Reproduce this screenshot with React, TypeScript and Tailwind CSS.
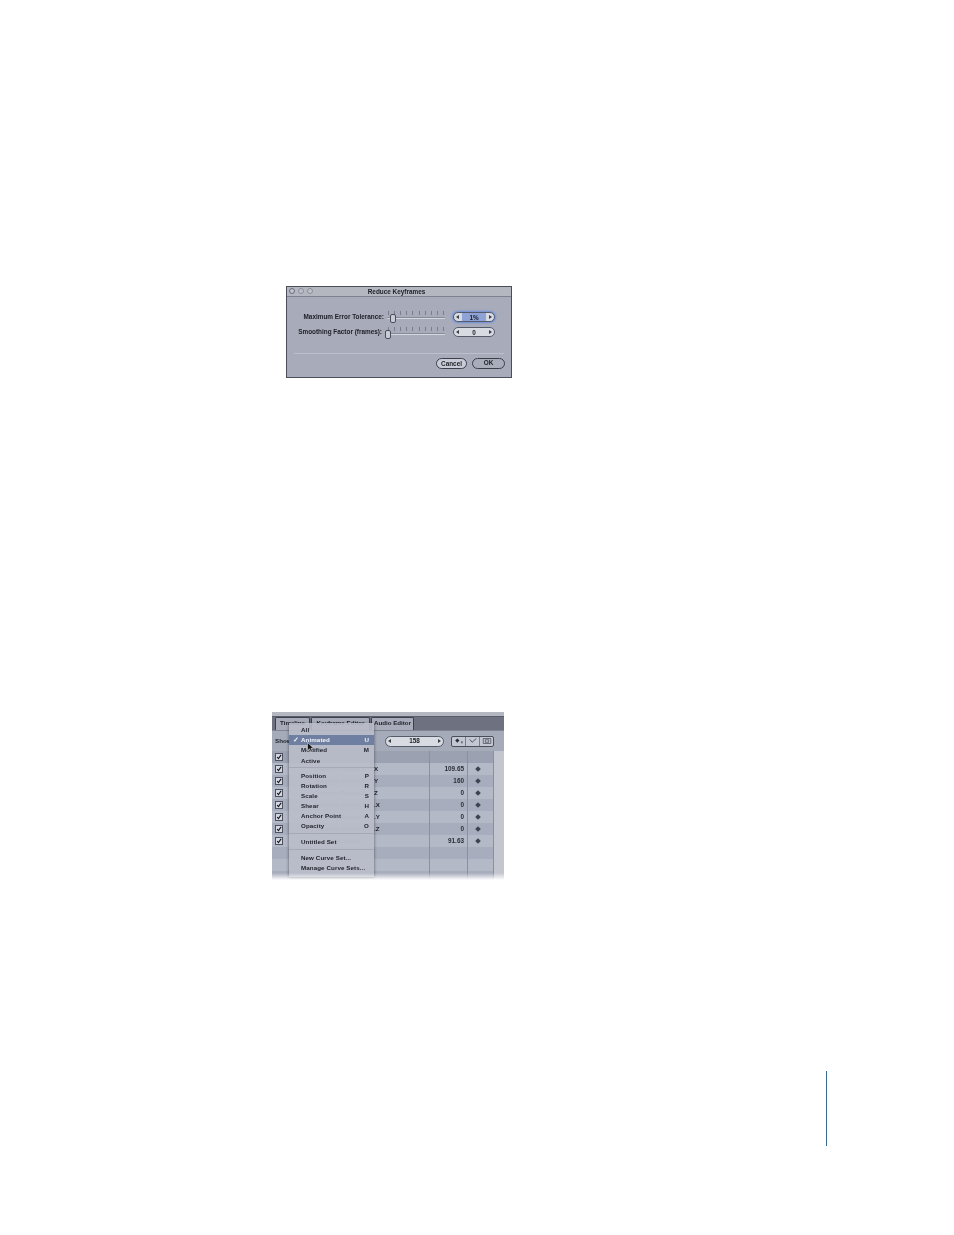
import React from "react";

const ticks = Array.from({ length: 10 });

function Slider({ thumbLeft, label, pad }: { thumbLeft: string; label: string; pad: string }) {
  return (
    <div className="flex items-center h-[15px]">
      <div className={`w-[100px] text-right whitespace-nowrap text-[6.4px] font-bold text-[#1c1e25] ${pad}`}>{label}</div>
      <div className="relative w-[58px] h-[15px]">
        <div className="absolute left-0 right-0 top-[2px] flex justify-between px-[1px]">
          {ticks.map((_, i) => (
            <div key={i} className="w-px h-[4px] bg-[#7a7e8c]" />
          ))}
        </div>
        <div className="absolute left-0 right-0 top-[8px] h-[2px] rounded-full bg-[#d5d8e0] border-t border-[#858998]" />
        <div className={`absolute top-[5px] w-[6px] h-[9px] rounded-[2px] border border-[#4a4d58] bg-[#c8ccd6] ${thumbLeft}`} />
      </div>
    </div>
  );
}

function Stepper({ value, active }: { value: string; active?: boolean }) {
  return (
    <div className={`flex items-center justify-between w-[42px] h-[10px] rounded-full border border-[#555a68] bg-[#d8dbe2] ${active ? "shadow-[0_0_2px_1px_#6d8fdc]" : ""}`}>
      <span className="w-0 h-0 ml-[2px] border-y-[2.5px] border-y-transparent border-r-[3px] border-r-[#3a3d48]" />
      <span className={`flex-1 mx-[3px] h-full text-center text-[6.4px] leading-[9px] font-bold text-[#1c1e25] ${active ? "bg-[#8fa3d6]" : ""}`}>{value}</span>
      <span className="w-0 h-0 mr-[2px] border-y-[2.5px] border-y-transparent border-l-[3px] border-l-[#3a3d48]" />
    </div>
  );
}

function Dialog() {
  return (
    <div className="w-[226px] h-[92px] border border-[#4b4e58] bg-[#a8acba] flex flex-col blur-[0.35px]">
      <div className="relative h-[10px] pr-[5px] bg-[#b4b6c0] border-b border-[#7d8190] flex items-center justify-center">
        <div className="absolute left-[2px] top-[1px] flex gap-[3px]">
          <div className="w-[6px] h-[6px] rounded-full border border-[#6a6d78] bg-[#c2c5ce]" />
          <div className="w-[6px] h-[6px] rounded-full border border-[#8b8e99] bg-[#bfc2cb]" />
          <div className="w-[6px] h-[6px] rounded-full border border-[#8b8e99] bg-[#bfc2cb]" />
        </div>
        <span className="text-[6.4px] font-bold text-[#1c1e25]">Reduce Keyframes</span>
      </div>
      <div className="pt-[12px] flex flex-col gap-[0.5px]">
        <div className="flex items-center">
          <Slider label="Maximum Error Tolerance:" thumbLeft="left-[3px]" pad="pr-[3px]" />
          <div className="ml-[8px]"><Stepper value="1%" active /></div>
        </div>
        <div className="flex items-center">
          <Slider label="Smoothing Factor (frames):" thumbLeft="left-[-2px]" pad="pr-[5px]" />
          <div className="ml-[8px]"><Stepper value="0" /></div>
        </div>
      </div>
      <div className="mt-[13px] mx-[7px] h-px bg-[#7f8392] border-b border-[#bcc0cc]" />
      <div className="mt-[4px] pr-[6px] flex justify-end gap-[5px]">
        <div className="w-[31px] h-[11px] rounded-full border border-[#3c3f4a] bg-[#c9ccd6] text-center text-[6.4px] leading-[9px] font-bold text-[#1c1e25]">Cancel</div>
        <div className="w-[33px] h-[11px] rounded-full border-[1.5px] border-[#3c3f4a] bg-[#a9adba] text-center text-[6.4px] leading-[8px] font-bold text-[#1c1e25]">OK</div>
      </div>
    </div>
  );
}

type RowData = { check?: boolean; ch?: string; ghost?: string; val?: string; d?: boolean; h?: boolean };

const rows: RowData[] = [
  { check: true, h: true },
  { check: true, ch: "X", ghost: "Transform.Position.X", val: "109.65", d: true },
  { check: true, ch: "Y", ghost: "Transform.Position.Y", val: "160", d: true },
  { check: true, ch: "Z", ghost: "Transform.Position.Z", val: "0", d: true },
  { check: true, ch: ".X", ghost: "Transform.Rotation.X", val: "0", d: true },
  { check: true, ch: ".Y", ghost: "Transform.Rotation.Y", val: "0", d: true },
  { check: true, ch: ".Z", ghost: "Transform.Rotation.Z", val: "0", d: true },
  { check: true, ghost: "Properties.Opacity", val: "91.63", d: true },
  {},
  {},
  {},
];

function Row({ r, i }: { r: RowData; i: number }) {
  const bg = r.h ? "bg-[#9ca1b2]" : i % 2 === 1 ? "bg-[#b4b9c8]" : "bg-[#a8adbd]";
  return (
    <div className={`flex h-[12px] items-center ${bg}`}>
      <div className="w-[17px] pl-[3px] flex">
        {r.check && (
          <div className="w-[8px] h-[8px] border border-[#4d5060] bg-[#d4d7df] flex items-center justify-center">
            <svg viewBox="0 0 8 8" className="w-[8px] h-[8px]"><path d="M1.5 4 L3.3 6.2 L6.8 1.2" fill="none" stroke="#14181f" strokeWidth="1.5" /></svg>
          </div>
        )}
      </div>
      <div className="w-[140px] pl-[26px] text-[5.4px] text-[#7f8496] whitespace-nowrap">{r.ghost}</div>
      <div className="w-0 text-[6.2px] font-bold text-[#1c1e25] whitespace-nowrap -ml-[55px]">{r.ch}</div>
      <div className="ml-[55px] h-full w-[38px] border-l border-[#8b90a0] pr-[3px] text-right text-[6.4px] leading-[12px] font-bold text-[#2b2e38]">{r.val}</div>
      <div className="h-full w-[27px] border-x border-[#8b90a0] flex items-center pl-[8px]">
        {r.d && <div className="w-[4px] h-[4px] rotate-45 bg-[#3e4352]" />}
      </div>
      <div className="flex-1 h-full bg-[#c4c6cf]" />
    </div>
  );
}

type MenuItem = { label?: string; key?: string; sel?: boolean; sep?: string };

const menu: MenuItem[] = [
  { label: "All" },
  { label: "Animated", key: "U", sel: true },
  { label: "Modified", key: "M" },
  { label: "Active" },
  { sep: "h-[5px]" },
  { label: "Position", key: "P" },
  { label: "Rotation", key: "R" },
  { label: "Scale", key: "S" },
  { label: "Shear", key: "H" },
  { label: "Anchor Point", key: "A" },
  { label: "Opacity", key: "O" },
  { sep: "h-[6px]" },
  { label: "Untitled Set" },
  { sep: "h-[6px]" },
  { label: "New Curve Set..." },
  { label: "Manage Curve Sets..." },
];

function Menu() {
  return (
    <div className="absolute left-[17px] top-[11px] w-[85px] h-[154px] pt-[2px] bg-[#b9bcc9]/90 shadow-[0_1px_3px_#00000080] flex flex-col">
      {menu.map((m, i) =>
        m.sep ? (
          <div key={i} className={`${m.sep} flex items-center`}><div className="w-full h-px bg-[#a5a9b6]" /></div>
        ) : (
          <div key={i} className={`relative h-[10.05px] flex items-center justify-between pl-[12px] pr-[5px] text-[6.2px] font-bold tracking-[0.1px] ${m.sel ? "bg-[#6f7fa1] text-[#f2f4f8]" : "text-[#1f2129]"}`}>
            {m.sel && <span className="absolute left-[4px] text-[6.5px]">✓</span>}
            <span>{m.label}</span>
            {m.key && <span>{m.key}</span>}
          </div>
        )
      )}
    </div>
  );
}

function Table() {
  return (
    <div className="relative w-[232px] h-[168px] overflow-hidden bg-[#a8adbd] blur-[0.35px]">
      <div className="h-[4px] bg-[#b4b6c0]" />
      <div className="h-[14px] bg-[#6d7180] flex items-end pl-[3px] gap-[1px] border-t border-[#5a5e6c]">
        {[["Timeline", "w-[35px]"], ["Keyframe Editor", "w-[59px]"], ["Audio Editor", "w-[43px]"]].map(([t, w]) => (
          <div key={t} className={`${w} h-[13px] rounded-t-[2px] border border-b-0 border-[#3d404c] bg-[#a8acba] text-center text-[6.2px] leading-[9px] font-bold text-[#1c1e25] whitespace-nowrap`}>{t}</div>
        ))}
      </div>
      <div className="h-[21px] bg-[#a6abba] border-t border-[#80858f] flex items-center pl-[3px]">
        <span className="w-[110px] text-[6.2px] font-bold text-[#1c1e25]">Show</span>
        <div className="flex items-center justify-between w-[59px] h-[11px] rounded-full border border-[#555a68] bg-[#d8dbe2] px-[2px]">
          <span className="w-0 h-0 border-y-[2.5px] border-y-transparent border-r-[3px] border-r-[#3a3d48]" />
          <span className="text-[6.4px] font-bold text-[#1c1e25]">158</span>
          <span className="w-0 h-0 border-y-[2.5px] border-y-transparent border-l-[3px] border-l-[#3a3d48]" />
        </div>
        <div className="ml-[7px] flex w-[43px] h-[11px] rounded-[2px] border border-[#4a4e5c] bg-[#c3c7d2] divide-x divide-[#7a7e8c]">
          <div className="flex-1 flex items-center justify-center">
            <svg viewBox="0 0 12 9" className="w-[10px] h-[8px]"><path d="M4 1.5 L6.5 4 L4 6.5 L1.5 4 Z" fill="#2b2e38" /><path d="M8.5 5 L10.5 5 L9.5 8 Z" fill="#2b2e38" /></svg>
          </div>
          <div className="flex-1 flex items-center justify-center">
            <svg viewBox="0 0 12 9" className="w-[10px] h-[8px]"><path d="M2 2.5 L5 6 L10 1.5" fill="none" stroke="#4a4e5c" strokeWidth="1.1" /></svg>
          </div>
          <div className="flex-1 flex items-center justify-center">
            <svg viewBox="0 0 12 9" className="w-[10px] h-[8px]"><path d="M1.5 1.5 H10.5 V7.5 H1.5 Z M4 3 H8 V6 H4 Z" fill="none" stroke="#4a4e5c" strokeWidth="0.9" /></svg>
          </div>
        </div>
      </div>
      <div className="flex flex-col">
        {rows.map((r, i) => <Row key={i} r={r} i={i} />)}
      </div>
      <Menu />
      <div className="absolute left-[35px] top-[30px]">
        <svg viewBox="0 0 8 11" className="w-[8px] h-[11px]"><path d="M0.5 0.5 L0.5 8.5 L2.5 6.8 L4 10 L5.3 9.4 L3.9 6.3 L6.5 6.2 Z" fill="#111" stroke="#eee" strokeWidth="0.5" /></svg>
      </div>
      <div className="absolute left-0 right-0 bottom-0 h-[7px] bg-gradient-to-b from-transparent to-white" />
    </div>
  );
}

export default function App() {
  return (
    <div className="w-[954px] h-[1235px] bg-white overflow-hidden font-['Liberation_Sans',sans-serif]">
      <div className="pt-[286px] pl-[286px]"><Dialog /></div>
      <div className="mt-[334px] pl-[272px]"><Table /></div>
      <div className="mt-[191px] ml-[826px] w-px h-[75px] bg-[#0a78c8]" />
    </div>
  );
}
